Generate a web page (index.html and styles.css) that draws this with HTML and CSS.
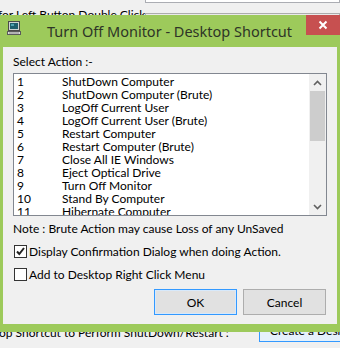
FILE: index.html
```html
<!DOCTYPE html>
<html>
<head>
<meta charset="utf-8">
<link rel="stylesheet" href="styles.css">
</head>
<body>
<div class="desk">
  <div class="bg-top">
    <div class="bg-topbox"></div>
    <div class="bg-row">
      <span class="bg-label">for Left Button Double Click :</span>
      <div class="bg-combo">Default Action</div>
    </div>
  </div>
  <div class="bg-bottom">
    <span class="bg-label2">op Shortcut to Perform ShutDown/Restart :</span>
    <div class="bg-button">Create a Desktop Shortcut</div>
  </div>
</div>

<div class="dialog">
  <div class="titlebar">
    <svg class="app-icon" width="16" height="16" viewBox="0 0 16 16">
      <rect x="2.5" y="1.5" width="11" height="9" fill="#cfd3d3" stroke="#4a4a4a"/>
      <rect x="4" y="3" width="8" height="6" fill="#1f5d6c"/>
      <rect x="5" y="4" width="3" height="2" fill="#4fa0b0"/>
      <rect x="1.5" y="11.5" width="13" height="3" fill="#dcdcdc" stroke="#5a5a5a"/>
      <rect x="3" y="12.5" width="10" height="1" fill="#8a8a8a"/>
    </svg>
    <div class="title">Turn Off Monitor - Desktop Shortcut</div>
    <div class="close">
      <svg width="10" height="10" viewBox="0 0 10 10"><path d="M1.5 1.5 L8.5 8.5 M8.5 1.5 L1.5 8.5" stroke="#fff" stroke-width="2"/></svg>
    </div>
  </div>
  <div class="client">
    <div class="label">Select Action :-</div>
    <div class="listbox">
      <div class="items">
        <div class="item"><span class="num">1</span><span>ShutDown Computer</span></div>
        <div class="item"><span class="num">2</span><span>ShutDown Computer (Brute)</span></div>
        <div class="item"><span class="num">3</span><span>LogOff Current User</span></div>
        <div class="item"><span class="num">4</span><span>LogOff Current User (Brute)</span></div>
        <div class="item"><span class="num">5</span><span>Restart Computer</span></div>
        <div class="item"><span class="num">6</span><span>Restart Computer (Brute)</span></div>
        <div class="item"><span class="num">7</span><span>Close All IE Windows</span></div>
        <div class="item"><span class="num">8</span><span>Eject Optical Drive</span></div>
        <div class="item"><span class="num">9</span><span>Turn Off Monitor</span></div>
        <div class="item"><span class="num">10</span><span>Stand By Computer</span></div>
        <div class="item"><span class="num">11</span><span>Hibernate Computer</span></div>
      </div>
      <div class="scrollbar">
        <div class="arrow">
          <svg width="9" height="6" viewBox="0 0 9 6"><path d="M1 5 L4.5 1.5 L8 5" fill="none" stroke="#606060" stroke-width="1.6"/></svg>
        </div>
        <div class="thumb"></div>
        <div class="track"></div>
        <div class="arrow">
          <svg width="9" height="6" viewBox="0 0 9 6"><path d="M1 1 L4.5 4.5 L8 1" fill="none" stroke="#606060" stroke-width="1.6"/></svg>
        </div>
      </div>
    </div>
    <div class="note">Note : Brute Action may cause Loss of any UnSaved</div>
    <label class="check check1"><span class="box"><svg width="11" height="11" viewBox="0 0 11 11"><path d="M2 5.5 L4.3 8 L9 2" fill="none" stroke="#222" stroke-width="2"/></svg></span><span>Display Confirmation Dialog when doing Action.</span></label>
    <label class="check check2"><span class="box"></span><span>Add to Desktop Right Click Menu</span></label>
    <div class="buttons">
      <div class="btn ok">OK</div>
      <div class="btn">Cancel</div>
    </div>
  </div>
</div>
</body>
</html>
```
FILE: styles.css
```css
html, body {
  margin: 0;
  padding: 0;
}
body {
  width: 340px;
  height: 348px;
  overflow: hidden;
  background: #f0f0f0;
  font-family: Lato, "Noto Sans", sans-serif;
  font-size: 12px;
  color: #000;
  position: relative;
}
.desk {
  height: 348px;
  display: flex;
  flex-direction: column;
  justify-content: space-between;
}
.bg-topbox {
  margin-left: 145px;
  height: 3px;
  border: 1px solid #abadb3;
  border-top: none;
  background: #fff;
  box-sizing: border-box;
}
.bg-row {
  display: flex;
  align-items: flex-start;
  margin-top: 4px;
}
.bg-label {
  margin-left: -2px;
  width: 147px;
  line-height: 15px;
  white-space: nowrap;
}
.bg-combo {
  flex: 1;
  margin-top: 6px;
  border: 1px solid #acacac;
  background: #e9e9e9;
  padding: 0 4px;
  line-height: 18px;
}
.bg-bottom {
  display: flex;
  align-items: flex-end;
  margin-bottom: 6px;
}
.bg-label2 {
  margin-left: -1px;
  width: 260px;
  line-height: 15px;
  white-space: nowrap;
  margin-bottom: 2px;
}
.bg-button {
  flex: 1;
  border: 1px solid #3399ff;
  border-right: none;
  background: #e5f1fb;
  padding-left: 10px;
  line-height: 20px;
  white-space: nowrap;
  overflow: hidden;
}

.dialog {
  position: absolute;
  left: -5px;
  top: 15px;
  width: 345px;
  height: 317px;
  background: #9dca5b;
  box-sizing: border-box;
  display: flex;
  flex-direction: column;
}
.titlebar {
  height: 32px;
  display: flex;
  align-items: flex-start;
}
.app-icon {
  margin: 5px 0 0 11px;
  flex: none;
}
.title {
  flex: 1;
  text-align: center;
  font-family: "Noto Sans", sans-serif;
  font-size: 14.5px;
  line-height: 20px;
  margin-top: 6px;
  color: #2e3527;
  padding-left: 11px;
  white-space: nowrap;
}
.close {
  width: 34px;
  height: 20px;
  background: #c75050;
  display: flex;
  align-items: center;
  justify-content: center;
  flex: none;
}
.client {
  flex: 1;
  margin: 0 3px 8px 8px;
  background: #f0f0f0;
  padding: 7px 10px 0 10px;
  display: flex;
  flex-direction: column;
}
.label {
  line-height: 15px;
}
.listbox {
  margin-top: 4px;
  height: 143px;
  border: 1px solid #828790;
  background: #fff;
  box-sizing: border-box;
  display: flex;
  overflow: hidden;
}
.items {
  flex: 1;
  padding: 1px 0 0 3px;
}
.item {
  height: 13px;
  line-height: 13px;
  display: flex;
  white-space: nowrap;
}
.num {
  width: 45px;
}
.scrollbar {
  width: 17px;
  background: #f0f0f0;
  display: flex;
  flex-direction: column;
}
.arrow {
  height: 17px;
  display: flex;
  align-items: center;
  justify-content: center;
}
.thumb {
  height: 50px;
  background: #cdcdcd;
  margin: 0 1px;
}
.track {
  flex: 1;
}
.note {
  margin-top: 5px;
  line-height: 15px;
}
.check {
  display: flex;
  align-items: center;
  height: 13px;
  line-height: 13px;
  margin-left: 1px;
}
.check1 {
  margin-top: 9px;
}
.check2 {
  margin-top: 10px;
}
.box {
  width: 13px;
  height: 13px;
  border: 1px solid #333;
  background: #fff;
  box-sizing: border-box;
  margin-right: 2px;
  display: flex;
  align-items: center;
  justify-content: center;
  flex: none;
}
.buttons {
  display: flex;
  justify-content: flex-end;
  gap: 6px;
  margin-top: 8px;
  margin-right: 1px;
}
.btn {
  width: 83px;
  height: 26px;
  box-sizing: border-box;
  border: 1px solid #adadad;
  background: #e1e1e1;
  display: flex;
  align-items: center;
  justify-content: center;
}
.btn.ok {
  border: 1px solid #3399ff;
  box-shadow: inset 0 0 0 1px #d7e9fb;
}
```
